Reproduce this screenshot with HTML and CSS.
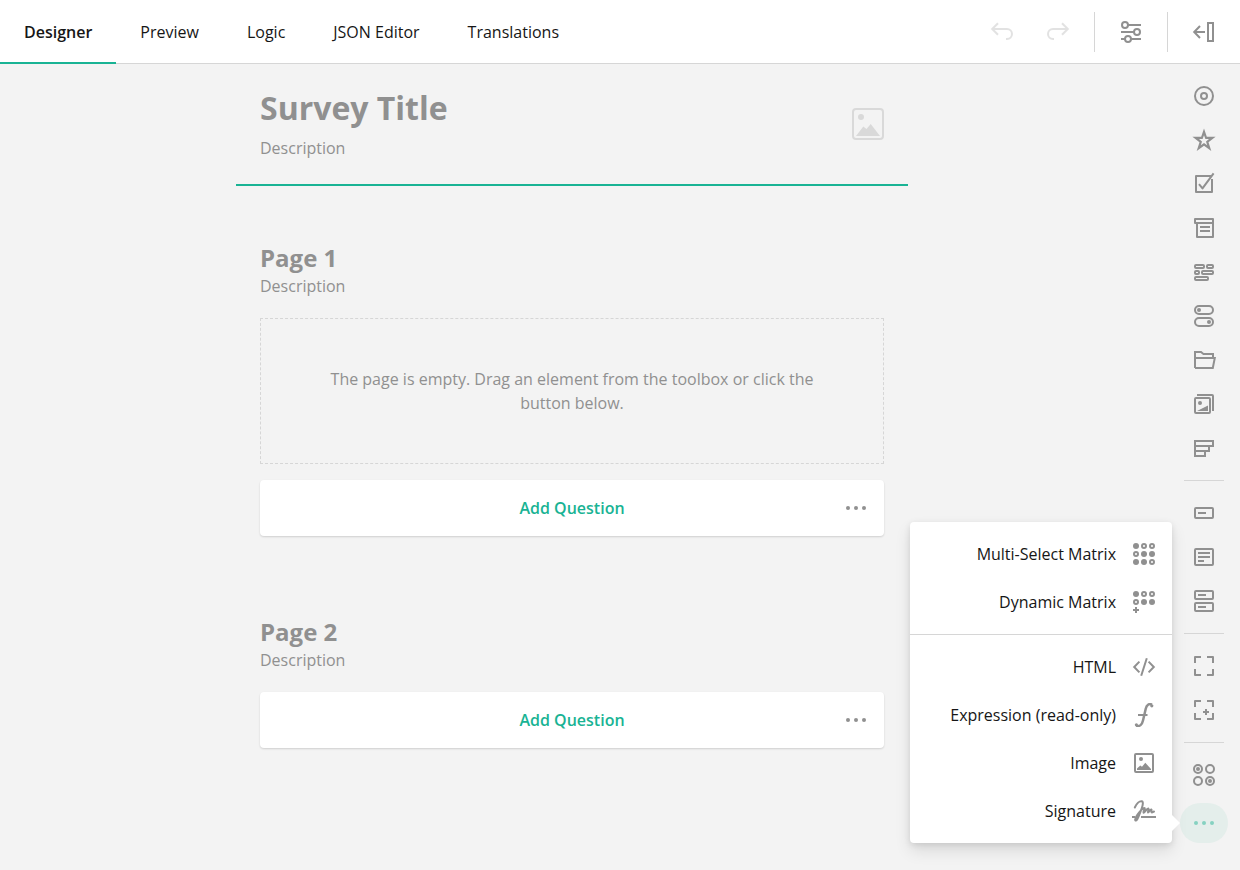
FILE: index.html
```html
<!DOCTYPE html>
<html lang="en">
<head>
<meta charset="utf-8">
<title>Survey Creator</title>
<link rel="stylesheet" href="styles.css">
</head>
<body>
<div class="creator">
  <header class="top-bar">
    <nav class="tabs">
      <a class="tab tab--active">Designer</a>
      <a class="tab">Preview</a>
      <a class="tab">Logic</a>
      <a class="tab">JSON Editor</a>
      <a class="tab">Translations</a>
    </nav>
    <div class="actions">
      <button class="action action--disabled" aria-label="Undo"><svg class="icon" viewBox="0 0 24 24"><path class="line" d="M8 3.2L2.2 9L8 14.8M2.2 9H17a5 5 0 0 1 0 10H16"/></svg></button>
      <button class="action action--disabled" aria-label="Redo"><svg class="icon" viewBox="0 0 24 24"><path class="line" d="M16 3.2L21.8 9L16 14.8M21.8 9H7a5 5 0 0 0 0 10H8"/></svg></button>
      <span class="divider"></span>
      <button class="action" aria-label="Settings"><svg class="icon" viewBox="0 0 24 24"><g class="line"><circle cx="6" cy="5" r="3"/><circle cx="18" cy="12" r="3"/><circle cx="9" cy="19" r="3"/><path d="M9 5H22M2 12H15M2 19H6M12 19H22"/></g></svg></button>
      <span class="divider"></span>
      <button class="action" aria-label="Show panel"><svg class="icon" viewBox="0 0 24 24"><path class="line" d="M8 6L2.2 12L8 18M2.2 12H13M16 3H21V21H16Z"/></svg></button>
    </div>
  </header>

  <div class="workspace">
    <main class="surface">
      <section class="survey-header">
        <div>
          <h1 class="survey-title">Survey Title</h1>
          <p class="description">Description</p>
        </div>
        <svg class="logo-placeholder" viewBox="0 0 32 32"><rect class="line" x="1" y="1" width="30" height="30" rx="3"/><circle cx="9" cy="9" r="3"/><path d="M4 28L11.3 18.5L14.5 21L18.7 16L28 28Z"/></svg>
      </section>

      <section class="page">
        <h2 class="page-title">Page 1</h2>
        <p class="description">Description</p>
        <div class="empty-page">The page is empty. Drag an element from the toolbox or click the button below.</div>
        <div class="add-question"><span>Add Question</span><svg class="icon more" viewBox="0 0 24 24"><circle cx="4" cy="12" r="2"/><circle cx="12" cy="12" r="2"/><circle cx="20" cy="12" r="2"/></svg></div>
      </section>

      <section class="page page--second">
        <h2 class="page-title">Page 2</h2>
        <p class="description">Description</p>
        <div class="add-question"><span>Add Question</span><svg class="icon more" viewBox="0 0 24 24"><circle cx="4" cy="12" r="2"/><circle cx="12" cy="12" r="2"/><circle cx="20" cy="12" r="2"/></svg></div>
      </section>
    </main>

    <aside class="toolbox">
      <div class="tool-group">
        <span class="tool"><svg class="icon" viewBox="0 0 24 24"><g class="line"><circle cx="12" cy="12" r="9"/><circle cx="12" cy="12" r="3"/></g></svg></span>
        <span class="tool"><svg class="icon" viewBox="0 0 24 24"><path fill-rule="evenodd" d="M12 .6L14.8 8.8H23.6L16.5 14.2L19.3 23L12 17.8L4.7 23L7.5 14.2L.4 8.8H9.2ZM12 7.2L10.6 11H7L10 13.4L8.8 17.3L12 15L15.2 17.3L14 13.4L17 11H13.4Z"/></svg></span>
        <span class="tool"><svg class="icon" viewBox="0 0 24 24"><path class="line" d="M19 4H4V20H20V7M7 12.2L10.5 16.4L21.6 1.4" stroke-linejoin="round"/></svg></span>
        <span class="tool"><svg class="icon" viewBox="0 0 24 24"><path class="line" stroke-linejoin="round" d="M5 7H3V3H21V21H5V7M5 7H21M8 11H18M8 15H18"/></svg></span>
        <span class="tool"><svg class="icon" viewBox="0 0 24 24"><g class="line"><rect x="3" y="5" width="9" height="3" rx="1"/><rect x="15" y="5" width="6" height="3" rx="1"/><rect x="3" y="11" width="4" height="3" rx="1"/><rect x="10" y="11" width="11" height="3" rx="1"/><rect x="3" y="17" width="13" height="3" rx="1"/></g></svg></span>
        <span class="tool"><svg class="icon" viewBox="0 0 24 24"><g class="line"><rect x="3" y="2" width="18" height="8" rx="4"/><rect x="3" y="14" width="18" height="8" rx="4"/></g><circle cx="7" cy="6" r="2"/><circle cx="17" cy="18" r="2"/></svg></span>
        <span class="tool"><svg class="icon" viewBox="0 0 24 24"><path class="line" d="M3 20V4H9L11.5 6H21V9.5M3 10H22.8L20.8 20H3"/></svg></span>
        <span class="tool"><svg class="icon" viewBox="0 0 24 24"><rect class="line" x="3" y="6" width="15" height="15" rx="1"/><path class="line" d="M5 3H20Q21 3 21 4V19"/><circle cx="8" cy="11" r="2"/><path d="M5 19L16 13.6V19Z"/></svg></span>
        <span class="tool"><svg class="icon" viewBox="0 0 24 24"><path class="line" d="M3 5H21V10H3ZM3 10H17V15H3ZM3 15H13V20H3Z"/></svg></span>
      </div>
      <div class="tool-group">
        <span class="tool"><svg class="icon" viewBox="0 0 24 24"><rect class="line" x="3" y="7" width="18" height="10" rx="1"/><path class="line" d="M6 12H14"/></svg></span>
        <span class="tool"><svg class="icon" viewBox="0 0 24 24"><rect class="line" x="3" y="4" width="18" height="16" rx="1"/><path class="line" d="M6 8H18M6 12H18M6 16H12"/></svg></span>
        <span class="tool"><svg class="icon" viewBox="0 0 24 24"><g class="line"><rect x="3" y="2" width="18" height="8" rx="1"/><rect x="3" y="14" width="18" height="8" rx="1"/><path d="M6 6H14M6 18H14"/></g></svg></span>
      </div>
      <div class="tool-group">
        <span class="tool"><svg class="icon" viewBox="0 0 24 24"><path class="line" stroke-linejoin="round" d="M3 9V3H9M15 3H21V9M21 15V21H15M9 21H3V15"/></svg></span>
        <span class="tool"><svg class="icon" viewBox="0 0 24 24"><path class="line" stroke-linejoin="round" d="M3 9V3H9M15 3H21V9M21 15V21H15M9 21H3V15M14 11V17M11 14H17"/></svg></span>
      </div>
      <div class="tool-group">
        <span class="tool"><svg class="icon" viewBox="0 0 24 24"><g class="line"><circle cx="6" cy="6" r="4"/><circle cx="18" cy="6" r="4"/><circle cx="6" cy="18" r="4"/><circle cx="18" cy="18" r="4"/></g><circle cx="6" cy="6" r="2"/><circle cx="18" cy="18" r="2"/></svg></span>
        <div class="tool tool--more"><svg class="icon" viewBox="0 0 24 24"><circle cx="4" cy="12" r="2"/><circle cx="12" cy="12" r="2"/><circle cx="20" cy="12" r="2"/></svg>
          <div class="popup">
            <ul class="menu">
              <li class="menu-item"><span>Multi-Select Matrix</span><svg class="icon" viewBox="0 0 24 24"><circle cx="4" cy="4" r="3"/><circle cx="12" cy="12" r="3"/><circle cx="20" cy="12" r="3"/><circle cx="4" cy="20" r="3"/><circle cx="12" cy="20" r="3"/><g class="line"><circle cx="12" cy="4" r="2"/><circle cx="20" cy="4" r="2"/><circle cx="4" cy="12" r="2"/><circle cx="20" cy="20" r="2"/></g></svg></li>
              <li class="menu-item"><span>Dynamic Matrix</span><svg class="icon" viewBox="0 0 24 24"><circle cx="4" cy="4" r="3"/><circle cx="12" cy="12" r="3"/><circle cx="20" cy="12" r="3"/><g class="line"><circle cx="12" cy="4" r="2"/><circle cx="20" cy="4" r="2"/><circle cx="4" cy="12" r="2"/><path d="M4 17V23M1 20H7"/></g></svg></li>
            </ul>
            <ul class="menu">
              <li class="menu-item"><span>HTML</span><svg class="icon" viewBox="0 0 24 24"><path class="line" d="M7.4 6.6L2.2 12L7.4 17.4M16.6 6.6L21.8 12L16.6 17.4M14.8 3.2L9.2 20.8"/></svg></li>
              <li class="menu-item"><span>Expression (read-only)</span><svg class="icon" viewBox="0 0 24 24"><path class="line script-f" d="M20 1.6C17 .2 14.6 2 13.8 5.5L11 17.5C10 21.8 7.8 23.8 4.2 22.6"/><path class="line" d="M6 12H15.5"/><circle cx="19.8" cy="2.8" r="1.6"/><circle cx="4.4" cy="21.8" r="1.6"/></svg></li>
              <li class="menu-item"><span>Image</span><svg class="icon" viewBox="0 0 24 24"><rect class="line" x="3" y="3" width="18" height="18" rx="1"/><circle cx="9" cy="8" r="2"/><path d="M5 19V17.5L8.3 14.5L10 15.7L13.3 11.8L19 18V19Z"/></svg></li>
              <li class="menu-item"><span>Signature</span><svg class="icon" viewBox="0 0 24 24"><path class="line" d="M0 18H3M9 18H24"/><path class="line signature" d="M2.8 8.5C4.5 4.5 7.5 1.8 9.8 2.2C12.5 3 9.5 10 7.5 15.2C6 19.5 4.5 22 3.5 21.5C2.5 20.5 5 16 8 12.5C10 10 12 8.5 12.8 9.2C13.3 10 10.7 13 11.5 13.7C12.5 14 14.5 9.5 16.3 9.5C17.5 10 15.3 13 16 13.5C17 13.5 18 10.3 19.3 10.5C20.3 11 18.7 13 19.7 13.4C20.5 13.5 21 13 22 12.5"/></svg></li>
            </ul>
          </div>
        </div>
      </div>
    </aside>
  </div>
</div>
</body>
</html>
```
FILE: styles.css
```css
* { box-sizing: border-box; }

body {
  margin: 0;
  font: 16px/24px "Open Sans", "Noto Sans", sans-serif;
  color: #161616;
  background: #f3f3f3;
}

h1, h2, p, ul { margin: 0; padding: 0; }

.creator {
  display: flex;
  flex-direction: column;
  height: 870px;
  overflow: hidden;
}

.icon {
  display: block;
  flex: none;
  width: 24px;
  height: 24px;
  fill: #909090;
  stroke: none;
}

.line {
  fill: none;
  stroke: #909090;
  stroke-width: 2;
}

/* Top bar */
.top-bar {
  display: flex;
  justify-content: space-between;
  flex: none;
  height: 64px;
  background: #fff;
  box-shadow: inset 0 -1px #d6d6d6;
}

.tabs { display: flex; }

.tab {
  padding: 20px 24px;
}

.tab--active {
  font-weight: 600;
  box-shadow: inset 0 -2px #19b394;
}

.actions {
  display: flex;
  align-items: center;
  gap: 16px;
  height: 64px;
  padding-right: 16px;
}

.action {
  width: 40px;
  height: 40px;
  padding: 8px;
  border: 0;
  background: none;
}

.action--disabled { opacity: 0.25; }

.divider {
  width: 1px;
  height: 40px;
  background: #d6d6d6;
}

/* Design surface */
.workspace {
  display: flex;
  flex: 1;
}

.surface {
  width: 672px;
  margin-left: 236px;
}

.survey-header {
  display: flex;
  justify-content: space-between;
  height: 122px;
  padding: 20px 24px 0;
  border-bottom: 2px solid #19b394;
}

.survey-title {
  margin-bottom: 4px;
  font-size: 32px;
  line-height: 48px;
  color: #909090;
}

.description { color: #909090; }

.logo-placeholder {
  width: 32px;
  height: 32px;
  margin-top: 24px;
  fill: #d9d9d9;
}

.logo-placeholder .line { stroke: #d9d9d9; }

.page { padding: 56px 24px 0; }

.page--second { padding-top: 80px; }

.page-title {
  font-size: 24px;
  line-height: 32px;
  color: #909090;
}

.empty-page {
  height: 146px;
  margin: 20px 0 -4px;
  padding: 48px 64px;
  border: 1px dashed #d6d6d6;
  color: #909090;
  text-align: center;
}

.add-question {
  display: grid;
  grid-template-columns: 24px 1fr 24px;
  align-items: center;
  height: 56px;
  margin-top: 20px;
  padding: 0 16px;
  border-radius: 4px;
  background: #fff;
  box-shadow: 0 1px 2px rgba(0, 0, 0, 0.15);
  color: #19b394;
  font-weight: 600;
  text-align: center;
}

.add-question span { grid-column: 2; }

/* Toolbox */
.toolbox {
  display: flex;
  flex-direction: column;
  align-items: center;
  width: 48px;
  margin-left: auto;
  margin-right: 12px;
}

.tool-group {
  display: flex;
  flex-direction: column;
  align-items: center;
  gap: 4px;
  width: 40px;
  padding: 12px 0;
}

.tool-group + .tool-group { border-top: 1px solid #d6d6d6; }

.tool {
  display: grid;
  place-items: center;
  width: 40px;
  height: 40px;
}

.tool--more {
  position: relative;
  width: 48px;
  margin-top: 4px;
  border-radius: 20px;
  background: #e4eeeb;
}

.tool--more > .icon { fill: #86d1c1; }

/* Overflow menu */
.popup {
  position: absolute;
  right: 56px;
  bottom: 0;
  width: 262px;
  border-radius: 4px;
  background: #fff;
  box-shadow: 0 8px 16px rgba(0, 0, 0, 0.1), 0 2px 6px rgba(0, 0, 0, 0.1);
}

.popup::after {
  content: "";
  position: absolute;
  right: -8px;
  bottom: 12px;
  border: 8px solid transparent;
  border-left-color: #fff;
  border-right: 0;
}

.menu {
  padding: 8px 0;
  list-style: none;
}

.menu + .menu { border-top: 1px solid #d6d6d6; }

.menu-item {
  display: flex;
  align-items: center;
  justify-content: flex-end;
  gap: 16px;
  height: 48px;
  padding: 0 16px;
}

.script-f { stroke-width: 2.5; }

.signature {
  stroke-width: 2;
  stroke-linecap: round;
  stroke-linejoin: round;
}
```
